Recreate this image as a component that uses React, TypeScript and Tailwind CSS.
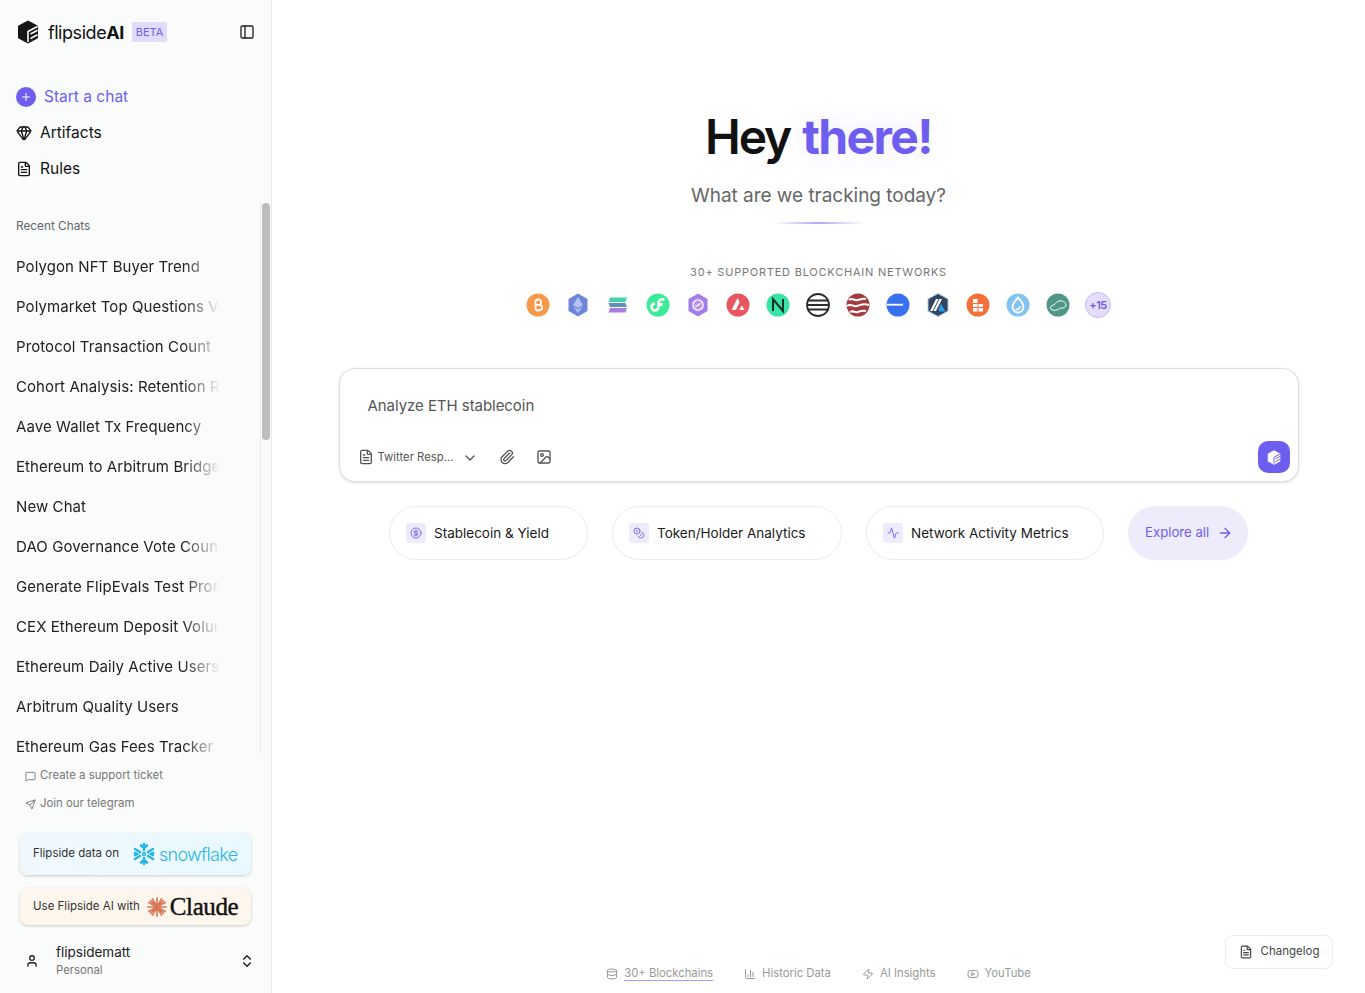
import {
  Activity,
  ArrowRight,
  ChartColumn,
  ChevronDown,
  ChevronsUpDown,
  CircleDollarSign,
  Coins,
  Database,
  FileText,
  Gem,
  Image,
  MessageSquare,
  PanelLeft,
  Paperclip,
  Plus,
  Send,
  User,
  Youtube,
  Zap,
} from "lucide-react";

const chats = [
  "Polygon NFT Buyer Trend",
  "Polymarket Top Questions Volume",
  "Protocol Transaction Count",
  "Cohort Analysis: Retention Rate",
  "Aave Wallet Tx Frequency",
  "Ethereum to Arbitrum Bridge",
  "New Chat",
  "DAO Governance Vote Count",
  "Generate FlipEvals Test Prompt",
  "CEX Ethereum Deposit Volume",
  "Ethereum Daily Active Users",
  "Arbitrum Quality Users",
  "Ethereum Gas Fees Tracker",
];

function Logo({ className, cut }: { className: string; cut: string }) {
  return (
    <svg viewBox="0 0 22 24" className={className}>
      <path d="M11 1 20.500 6v12L11 23 1.500 18V6z" fill="currentColor" stroke="currentColor" strokeLinejoin="round" />
      <path d="M11 22V11.500l9.500-5M13.500 14l7-3.700M13.500 18.500l7-3.700" fill="none" stroke={cut} strokeWidth="1.600" />
    </svg>
  );
}

function Chains() {
  return (
    <div className="flex items-center gap-4 mt-[12px]">
      {/* bitcoin */}
      <svg viewBox="0 0 24 24" className="w-6 h-6">
        <circle cx="12" cy="12" r="11.500" fill="#f7994b" />
        <path d="M9.500 7h3.800c2.400 0 2.400 4.600 0 4.800H9.500m0 0h4.500c2.700 0 2.700 5.200 0 5.200H9.500m0-10v10M11 5.500V7m2-1.500V7m-2 10v1.500m2-1.500v1.500" fill="none" stroke="#fff" strokeWidth="1.700" />
      </svg>
      {/* ethereum */}
      <svg viewBox="0 0 24 24" className="w-6 h-6">
        <path d="M12 .5 21.500 6v12L12 23.500 2.500 18V6z" fill="#6d86dc" />
        <path d="m12 4 5 8-5 3-5-3zM7 13.500l5 3 5-3-5 6.500z" fill="#b6c3f0" />
      </svg>
      {/* solana */}
      <svg viewBox="0 0 24 24" className="w-6 h-6">
        <circle cx="12" cy="12" r="11.500" fill="#fff" />
        <path d="M4 4.500h17l-1.500 4.500H2.500z" fill="#43d3ad" />
        <path d="M2.500 10h17l1.500 4H4z" fill="#5d93b9" />
        <path d="M4 15h17l-1.500 4.500H2.500z" fill="#a77ee8" />
      </svg>
      {/* flow */}
      <svg viewBox="0 0 24 24" className="w-6 h-6">
        <circle cx="12" cy="12" r="11.500" fill="#3ceb98" />
        <path d="M18.500 6.500H16a3.500 3.500 0 0 0-3.500 3.500v4a3.500 3.500 0 1 1-3.500-3.500" fill="none" stroke="#fff" strokeWidth="2.600" />
        <path d="M12.500 11.500h4" stroke="#fff" strokeWidth="3" />
      </svg>
      {/* polygon */}
      <svg viewBox="0 0 24 24" className="w-6 h-6">
        <path d="M12 .5 21.500 6v12L12 23.500 2.500 18V6z" fill="#a27de8" />
        <path d="M12 4.500 18 8v8l-6 3.500L6 16V8z" fill="#b795ee" />
        <circle cx="12" cy="12" r="5" fill="none" stroke="#fff" strokeWidth="1.200" />
        <path d="M9.500 13.500 14.500 10.500" stroke="#fff" strokeWidth="1.200" />
      </svg>
      {/* avalanche */}
      <svg viewBox="0 0 24 24" className="w-6 h-6">
        <circle cx="12" cy="12" r="11.500" fill="#e8575f" />
        <path d="M11.500 5 5.500 17h4.300l3.900-8zM15.800 12.500l-2.600 4.500h5.300z" fill="#fff" />
      </svg>
      {/* near */}
      <svg viewBox="0 0 24 24" className="w-6 h-6">
        <circle cx="12" cy="12" r="11.500" fill="#38e3a6" />
        <path d="M7 18V6l10 12V6" fill="none" stroke="#10312a" strokeWidth="2" />
      </svg>
      {/* lined coin */}
      <svg viewBox="0 0 24 24" className="w-6 h-6">
        <circle cx="12" cy="12" r="11" fill="#fff" stroke="#2b2d2f" strokeWidth="1.800" />
        <path d="M1.500 7.500h21M1 12h22M1.500 16.500h21" fill="none" stroke="#2b2d2f" strokeWidth="1.800" />
      </svg>
      {/* sei */}
      <svg viewBox="0 0 24 24" className="w-6 h-6">
        <circle cx="12" cy="12" r="11.500" fill="#a33c3f" />
        <path d="M3 7c3-3 5 1 9 0s5-2 8-1M1 13c4-3 6 1 10 0s6-3 12-1M4 19c3-2 5 1 8 0s4-2 8-1" fill="none" stroke="#fff" strokeWidth="2" />
      </svg>
      {/* base */}
      <svg viewBox="0 0 24 24" className="w-6 h-6">
        <circle cx="12" cy="12" r="11.500" fill="#3870ee" />
        <rect x="1" y="10.800" width="16" height="1.800" fill="#fff" />
      </svg>
      {/* arbitrum */}
      <svg viewBox="0 0 24 24" className="w-6 h-6">
        <path d="M12 .5 22 6v12l-10 5.500L2 18V6z" fill="#35445e" stroke="#9dcced" strokeWidth="1" />
        <path d="m10 6-6 12h2.500l6-12zM13.500 6l-6 12H10l6-12z" fill="#fff" />
        <path d="m15 11-2.500 5 1 2.500h6z" fill="#28a0f0" />
      </svg>
      {/* gnosis style */}
      <svg viewBox="0 0 24 24" className="w-6 h-6">
        <circle cx="12" cy="12" r="11.500" fill="#f3703a" />
        <g fill="#fff">
          <rect x="7" y="6" width="4.500" height="4" />
          <rect x="7" y="11" width="4.500" height="3" />
          <rect x="7" y="15" width="4.500" height="3.500" />
          <rect x="12.500" y="11" width="4.500" height="3" />
          <rect x="12.500" y="15" width="4.500" height="3.500" />
        </g>
      </svg>
      {/* sui */}
      <svg viewBox="0 0 24 24" className="w-6 h-6">
        <circle cx="12" cy="12" r="11.500" fill="#83c3f0" />
        <path d="M12 4.500c2.500 3 5.500 6 5.500 9.500a5.500 5.500 0 0 1-11 0c0-3.500 3-6.500 5.500-9.500z" fill="none" stroke="#fff" strokeWidth="1.800" />
        <path d="M9.500 16c2 1 4.500 0 5-3" fill="none" stroke="#fff" strokeWidth="1.500" />
      </svg>
      {/* kaia style */}
      <svg viewBox="0 0 24 24" className="w-6 h-6">
        <circle cx="12" cy="12" r="11.500" fill="#4f9689" />
        <path d="M4 15c1-3 3-2 5-4s4-4 7-3c2 .5 4 2 4 4s-2 3-4 3-3 1-5 2-6 0-7-2z" fill="none" stroke="#fff" strokeWidth="1" />
      </svg>
      <div className="w-[26px] h-[26px] -ml-px rounded-full bg-[#e4defc] border border-[#c4b8fa] flex items-center justify-center text-[11px] font-semibold tracking-[-0.5px] text-[#6f5bd6]">
        +15
      </div>
    </div>
  );
}

function Chip({ icon, label, className }: { icon: React.ReactNode; label: string; className: string }) {
  return (
    <div className={`h-[54px] rounded-[27px] bg-white border border-[#ececef] flex items-center gap-2 ${className}`}>
      {icon}
      <span className="text-[13.5px] text-[#1a1a1a]">{label}</span>
    </div>
  );
}

export default function App() {
  return (
    <div className="flex h-[993px] overflow-hidden bg-white font-['Inter',sans-serif] text-[#111]">
      {/* sidebar */}
      <aside className="relative w-[272px] shrink-0 h-full bg-[#fafbfb] border-r border-[#e8e9ea] flex flex-col">
        <div className="flex items-center h-[24px] mt-[20px] pl-[17px] pr-[16px]">
          <Logo className="w-[22px] h-[24px] text-[#161616]" cut="#fafbfb" />
          <span className="ml-[9px] text-[18px] tracking-[-0.45px] text-[#111]">
            flipside<b className="font-bold">AI</b>
          </span>
          <span className="ml-2 px-1 h-5 flex items-center rounded-[2px] bg-[#e0dcfb] text-[11px] text-[#6e5ef0]">BETA</span>
          <PanelLeft className="ml-auto w-4 h-4 text-[#222]" strokeWidth={2} />
        </div>

        <div className="flex flex-col mt-[35px] pl-4">
          <div className="flex items-center h-9 gap-2 text-[#6e5ef0]">
            <span className="w-5 h-5 rounded-full bg-[#6e5ef0] flex items-center justify-center">
              <Plus className="w-3 h-3 text-white" />
            </span>
            <span className="text-[15.5px]">Start a chat</span>
          </div>
          <div className="flex items-center h-9 gap-2">
            <Gem className="w-4 h-4" />
            <span className="text-[15.5px]">Artifacts</span>
          </div>
          <div className="flex items-center h-9 gap-2">
            <FileText className="w-4 h-4" />
            <span className="text-[15.5px]">Rules</span>
          </div>
        </div>

        <div className="relative h-[552px] mt-[15px] shrink-0 overflow-hidden">
          <div className="absolute left-[260px] top-0 bottom-0 w-[11px] border-l border-[#e8e9ea]">
            <div className="ml-px mt-px w-2 h-[237px] rounded-full bg-[#bdbdbd]" />
          </div>
          <p className="pl-4 pt-[16px] text-[11.8px] leading-4 text-[#666]">Recent Chats</p>
          <ul className="mt-[13px]">
            {chats.map((chat) => (
              <li key={chat} className="h-10 pl-4 flex items-center">
                <span className="w-[204px] overflow-hidden whitespace-nowrap text-[15px] tracking-[0.08px] text-[#222] [mask-image:linear-gradient(to_right,black_82%,transparent)]">
                  {chat}
                </span>
              </li>
            ))}
          </ul>
        </div>

        <div className="pl-[25px] flex flex-col mt-[8px] text-[11.4px] text-[#777]">
          <div className="flex items-center h-7 gap-[4px]">
            <MessageSquare className="w-[11px] h-[11px]" />
            Create a support ticket
          </div>
          <div className="flex items-center h-7 gap-[4px]">
            <Send className="w-[11px] h-[11px]" />
            Join our telegram
          </div>
        </div>

        <div className="mx-5 mt-[15px] h-[42px] w-[231px] rounded-lg bg-gradient-to-r from-[#f0f8fe] to-[#e8f9ff] shadow-[0_1px_3px_rgba(0,0,0,0.2)] flex items-center pl-[13px] text-[11.5px] text-[#333]">
          Flipside data on
          <svg viewBox="0 0 24 24" className="ml-[13px] w-6 h-6" fill="none" stroke="#29b5e8" strokeWidth="2.600" strokeLinecap="round">
            <path d="M12 2v6M12 16v6M3 7l5 3M16 14l5 3M3 17l5-3M16 10l5-3M9 3.500 12 6l3-2.500M9 20.500l3-2.500 3 2.500M3 11l2 1-2 1M21 11l-2 1 2 1" />
            <circle cx="12" cy="12" r="1.500" strokeWidth="1.500" />
          </svg>
          <span className="ml-[3px] text-[18px] font-light tracking-[-0.7px] text-[#29b5e8]">snowflake</span>
        </div>
        <div className="mx-5 mt-[13px] h-[37px] w-[231px] rounded-lg bg-[#fdf6ec] shadow-[0_1px_3px_rgba(0,0,0,0.2)] flex items-center pl-[13px] text-[11.5px] text-[#333]">
          Use Flipside AI with
          <svg viewBox="0 0 20 20" className="ml-[7px] w-5 h-5" fill="none" stroke="#d9775a" strokeWidth="1.700" strokeLinecap="round">
            <path d="M10 1v18M1 10h18M3.600 3.600l12.800 12.800M16.400 3.600 3.600 16.400M5.500 1.800l9 16.400M14.500 1.800l-9 16.400M1.800 5.500l16.400 9M18.200 5.500l-16.400 9" />
          </svg>
          <span className="ml-[3px] font-['Liberation_Serif',serif] text-[25px] leading-none tracking-[-0.4px] text-[#111] [-webkit-text-stroke:0.4px_#111]">Claude</span>
        </div>

        <div className="flex items-center mt-[14px] h-[44px] pl-[25px] pr-4">
          <User className="w-[14px] h-[14px] text-[#222]" strokeWidth={2.200} />
          <div className="ml-[17px] flex flex-col">
            <span className="text-[13.5px] leading-[18px] text-[#222]">flipsidematt</span>
            <span className="text-[11.3px] leading-[18px] text-[#777]">Personal</span>
          </div>
          <ChevronsUpDown className="ml-auto w-4 h-4 text-[#222]" strokeWidth={2.200} />
        </div>
      </aside>

      {/* main */}
      <main className="relative flex-1 flex flex-col items-center h-full">
        <h1 className="mt-[108px] h-[58px] text-[48px] leading-[58px] font-semibold text-[#111] whitespace-nowrap">
          <span className="tracking-[-2.2px]">Hey</span>{" "}
          <span className="tracking-[-1.6px] font-bold text-[#6e5ef0] [text-shadow:0_0_30px_rgba(110,94,240,0.12)]">there!</span>
        </h1>
        <p className="mt-4 text-[19px] leading-7 text-[#666] tracking-[-0.03px]">What are we tracking today?</p>
        <div className="mt-3 w-[92px] h-[2px] bg-gradient-to-r from-transparent via-[#b3a8f6] to-transparent" />
        <p className="mt-[40px] text-[11px] leading-4 tracking-[0.78px] text-[#777] uppercase">30+ supported blockchain networks</p>
        <Chains />

        <div className="mt-[50px] w-[960px] h-[114px] shrink-0 rounded-[16px] bg-white border border-[#dfe0e2] shadow-[0_1px_3px_rgba(0,0,0,0.14)] flex flex-col pl-[19px] pr-2">
          <p className="mt-[27px] pl-[9px] text-[15px] leading-5 text-[#555] tracking-[-0.05px]">Analyze ETH stablecoin</p>
          <div className="mt-[26px] flex items-center">
            <FileText className="w-4 h-4 text-[#555] -mt-px -ml-px" />
            <span className="ml-1 text-[11.3px] text-[#555]">Twitter Resp...</span>
            <ChevronDown className="ml-[9px] w-4 h-4 text-[#555]" />
            <Paperclip className="ml-[21px] w-4 h-4 text-[#555] -mt-px" />
            <Image className="ml-[21px] w-4 h-4 text-[#555] -mt-px" />
            <div className="ml-auto -mt-px w-8 h-8 rounded-[10px] bg-[#6e5ef0] flex items-center justify-center">
              <Logo className="w-[14px] h-[15px] text-white" cut="#6e5ef0" />
            </div>
          </div>
        </div>

        <div className="mt-[24px] flex gap-6">
          <Chip
            className="w-[199px] pl-4"
            label="Stablecoin & Yield"
            icon={
              <span className="w-5 h-5 rounded-[3px] bg-[#eeebfd] flex items-center justify-center">
                <CircleDollarSign className="w-3 h-3 text-[#7c6cf2]" />
              </span>
            }
          />
          <Chip
            className="w-[230px] pl-4"
            label="Token/Holder Analytics"
            icon={
              <span className="w-5 h-5 rounded-[3px] bg-[#eeebfd] flex items-center justify-center">
                <Coins className="w-3 h-3 text-[#7c6cf2]" />
              </span>
            }
          />
          <Chip
            className="w-[238px] pl-4"
            label="Network Activity Metrics"
            icon={
              <span className="w-5 h-5 rounded-[3px] bg-[#eeebfd] flex items-center justify-center">
                <Activity className="w-3 h-3 text-[#7c6cf2]" />
              </span>
            }
          />
          <div className="w-[120px] h-[54px] rounded-[27px] bg-[#eeebfb] flex items-center pl-[17px] gap-2 text-[13.2px] text-[#6e5ef0]">
            Explore all
            <ArrowRight className="w-4 h-4" />
          </div>
        </div>

        <div className="mt-auto mb-[11px] flex items-center gap-[31px] text-[11.3px] text-[#999]">
          <span className="flex items-center gap-[6px]">
            <Database className="w-3 h-3" />
            <span className="border-b border-[#a99df5] leading-[14px]">30+ Blockchains</span>
          </span>
          <span className="flex items-center gap-[6px]">
            <ChartColumn className="w-3 h-3" />
            Historic Data
          </span>
          <span className="flex items-center gap-[6px]">
            <Zap className="w-3 h-3" />
            AI Insights
          </span>
          <span className="flex items-center gap-[6px]">
            <Youtube className="w-3 h-3" />
            YouTube
          </span>
        </div>

        <div className="absolute right-[32px] bottom-[24px] w-[108px] h-[34px] rounded-lg border border-[#ececef] bg-white flex items-center justify-center gap-2 text-[11.5px] text-[#444]">
          <FileText className="w-[14px] h-[14px]" />
          Changelog
        </div>
      </main>
    </div>
  );
}
